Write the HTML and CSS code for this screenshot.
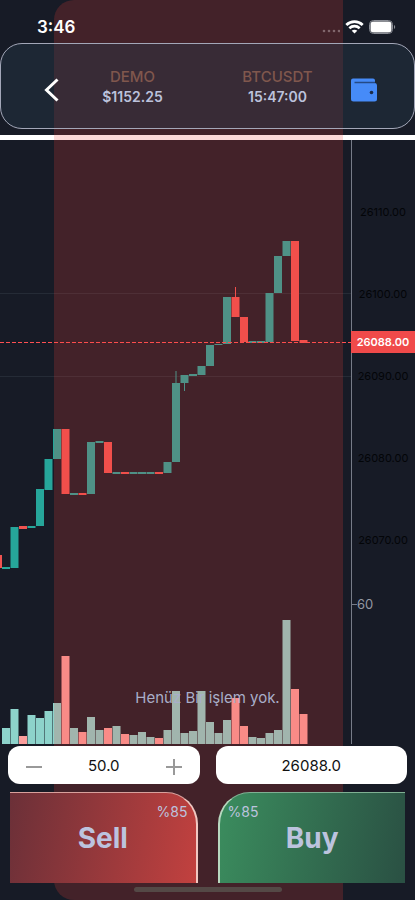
FILE: index.html
```html
<!DOCTYPE html>
<html lang="tr">
<head>
    <meta charset="UTF-8">
    <meta name="viewport" content="width=device-width, initial-scale=1.0">
    <title>BTCUSDT</title>
    <link rel="stylesheet" href="styles.css">
</head>
<body>
    <div class="app">
        <div class="tint"></div>

        <!-- Status bar -->
        <div class="status">
            <span class="clock">3:46</span>
            <span class="status-icons">
                <svg class="dots" width="18" height="14" viewBox="0 0 18 14">
                    <circle cx="2" cy="11" r="1.3"/><circle cx="7" cy="11" r="1.3"/><circle cx="12" cy="11" r="1.3"/><circle cx="17" cy="11" r="1.3"/>
                </svg>
                <svg width="19" height="14" viewBox="0 0 19 14" fill="none" stroke="#fff">
                    <path d="M1.3 5C6 .6 13 .6 17.700 5" stroke-width="2.800"/>
                    <path d="M4.300 8.200c3-2.800 7.400-2.800 10.400 0" stroke-width="2.600"/>
                    <path d="M9.500 13.500 6.700 10.700c1.600-1.400 4-1.400 5.600 0z" fill="#fff" stroke="none"/>
                </svg>
                <svg width="27" height="14" viewBox="0 0 27 14">
                    <rect x=".5" y=".5" width="23" height="13" rx="4" fill="none" stroke="#8a8d95"/>
                    <rect x="1.500" y="1.500" width="21" height="11" rx="3" fill="#fff"/>
                    <path d="M25 5v4c1.600-.6 1.600-3.400 0-4z" fill="#8a8d95"/>
                </svg>
            </span>
        </div>

        <header class="header">
            <button class="icon-btn" type="button" aria-label="Geri">
                <svg width="16" height="24" viewBox="0 0 16 24" fill="none" stroke="#fff" stroke-width="3">
                    <path d="M13.500 1.500 2.500 12l11 10.500"/>
                </svg>
            </button>
            <div class="info">
                <span class="info-label">DEMO</span>
                <span class="info-value">$1152.25</span>
            </div>
            <div class="info">
                <span class="info-label">BTCUSDT</span>
                <span class="info-value">15:47:00</span>
            </div>
            <button class="icon-btn" type="button" aria-label="Cüzdan">
                <svg width="28" height="24" viewBox="0 0 28 24">
                    <path d="M3 .5h20a2 2 0 0 1 2 2v2.500a2.500 2.500 0 0 1 2 2.500V21a2.500 2.500 0 0 1-2.500 2.500h-21A2.500 2.500 0 0 1 1 21V2.500a2 2 0 0 1 2-2z" fill="#468bf8"/>
                    <path d="M4.500 4.500H25" stroke="#244a86" stroke-width="1.500"/>
                    <circle cx="21.500" cy="14.500" r="1.800" fill="#1b2c49"/>
                </svg>
            </button>
        </header>

        <!-- Chart -->
        <div class="chart">
            <svg class="plot" id="plot" viewBox="0 140 415 604">
                <path class="grid-line" d="M0 293.500h351M0 376.500h351"/>
                <g id="candles"></g>
                <path class="price-line" d="M0 342.500h351"/>
                <g id="volumes"></g>
                <path class="axis-line" d="M351.500 140v604M352 604.500h5"/>
                <g class="axis-text">
                    <text x="383" y="216">26110.00</text>
                    <text x="383" y="298">26100.00</text>
                    <text x="383" y="380">26090.00</text>
                    <text x="383" y="462">26080.00</text>
                    <text x="383" y="544">26070.00</text>
                </g>
                <text class="volume-text" x="357" y="609">60</text>
                <rect class="price-tag" x="351" y="331" width="64" height="22"/>
                <text class="price-text" x="383" y="346">26088.00</text>
            </svg>
        </div>
        <p class="empty">Henüz Bir işlem yok.</p>

        <!-- Order form -->
        <form class="order">
            <div class="field">
                <button class="step" type="button" aria-label="Azalt">
                    <svg width="16" height="16" viewBox="0 0 16 16"><path d="M0 8h16"/></svg>
                </button>
                <input type="text" aria-label="Miktar" value="50.0">
                <button class="step" type="button" aria-label="Artır">
                    <svg width="16" height="16" viewBox="0 0 16 16"><path d="M0 8h16M8 0v16"/></svg>
                </button>
            </div>
            <div class="field">
                <input type="text" aria-label="Fiyat" value="26088.0">
            </div>
            <button class="trade sell" type="button"><span class="rate">%85</span>Sell</button>
            <button class="trade buy" type="button"><span class="rate">%85</span>Buy</button>
        </form>
        <div class="home-bar"></div>
    </div>

    <script>
        // [up, top, bottom, volume top, wick top, wick bottom]
        var bars = [
            [1, 567, 569, 728], [1, 527, 568, 709], [0, 526, 529, 736], [1, 526, 528, 715],
            [1, 489, 526, 718], [1, 459, 490, 711], [1, 429, 459, 703], [0, 429, 494, 656],
            [1, 493, 495, 728], [0, 493, 495, 732], [1, 442, 494, 717], [1, 441, 443, 730],
            [0, 442, 473, 728], [1, 472, 474, 726], [0, 472, 474, 734], [1, 472, 474, 735],
            [1, 472, 474, 732], [1, 472, 474, 737], [0, 472, 474, 738], [1, 462, 473, 730],
            [1, 383, 462, 691, 371, 383], [1, 375, 383, 733, 383, 391], [1, 374, 376, 731], [1, 366, 375, 691],
            [1, 345, 366, 722], [1, 344, 345, 733], [1, 297, 344, 720], [0, 297, 317, 698, 287, 297],
            [0, 317, 342, 726], [1, 341, 343, 737], [1, 341, 343, 738], [1, 293, 342, 733],
            [1, 256, 293, 730], [1, 241, 256, 620], [0, 241, 341, 689], [0, 340, 343, 714]
        ];
        var step = 8.5;

        function addRect(group, name, x, top, width, bottom) {
            var rect = document.createElementNS("http://www.w3.org/2000/svg", "rect");
            rect.setAttribute("class", name);
            rect.setAttribute("x", x);
            rect.setAttribute("y", top);
            rect.setAttribute("width", width);
            rect.setAttribute("height", bottom - top);
            document.getElementById(group).appendChild(rect);
        }

        // Candle cut off by the left edge
        addRect("candles", "down", 0, 555, 2, 568);

        bars.forEach(function(bar, i) {
            var x = 2 + i * step;
            var name = bar[0] ? "up" : "down";
            addRect("candles", name, x, bar[1], 8, bar[2]);
            if (bar[4]) {
                addRect("candles", name, x + 3.5, bar[4], 1, bar[5]);
            }
            addRect("volumes", name, x, bar[3], 8, 744);
        });
    </script>
</body>
</html>
```
FILE: styles.css
```css
* {
    box-sizing: border-box;
}

body {
    margin: 0;
    background-color: #171b26;
    font-family: Inter, "Liberation Sans", sans-serif;
}

.app {
    position: relative;
    min-height: 100vh;
    overflow: hidden;
}

.tint {
    position: absolute;
    top: 0;
    bottom: 0;
    left: 13%;
    right: 72px;
    z-index: 1;
    border-radius: 20px 0 0 20px;
    background-color: rgba(244, 67, 54, 0.2);
    pointer-events: none;
}

.status,
.header,
.empty,
.order,
.home-bar {
    position: relative;
    z-index: 2;
}

.status {
    display: flex;
    justify-content: space-between;
    align-items: center;
    height: 43px;
    padding: 11px 19px 0 37px;
}

.clock {
    color: #fff;
    font-size: 17px;
    font-weight: 600;
}

.status-icons {
    display: flex;
    gap: 5px;
}

.dots {
    fill: #80666c;
}

.header {
    display: grid;
    grid-template-columns: 16px 1fr 1fr 28px;
    align-items: center;
    height: 86px;
    padding: 8px 36px 0 43px;
    border: 1px solid #a3a7b8;
    border-radius: 22px;
    background-color: rgba(39, 57, 76, 0.4);
}

button {
    padding: 0;
    border: 0;
    background: none;
    font-family: inherit;
    cursor: pointer;
}

.icon-btn svg,
.step svg {
    display: block;
}

.info {
    display: flex;
    flex-direction: column;
    align-items: center;
    padding-bottom: 6px;
    line-height: 20px;
}

.info-label {
    color: #80574d;
    font-size: 15px;
    font-weight: 500;
}

.info-value {
    color: #bcc2dc;
    font-size: 14px;
    font-weight: 600;
}

.chart {
    margin-top: 6px;
    border-top: 5px solid #fff;
}

.plot {
    display: block;
    width: 100%;
}

.grid-line {
    stroke: #252b36;
}

.price-line {
    stroke: #ff5052;
    stroke-dasharray: 4 2;
}

.axis-line {
    fill: none;
    stroke: #777c88;
}

.up {
    fill: #26a69a;
}

.down {
    fill: #f05350;
}

#volumes .up {
    fill: #8dd3cb;
}

#volumes .down {
    fill: #fa9e9c;
}

.axis-text,
.price-text {
    font-size: 11px;
    text-anchor: middle;
}

.axis-text {
    fill: #030508;
}

.price-tag {
    fill: #f04a4a;
}

.price-text {
    fill: #fff;
    font-weight: 600;
}

.volume-text {
    fill: #9598a1;
    font-size: 13px;
}

.empty {
    height: 20px;
    margin: -56px 0 38px;
    color: #a9aec8;
    font-size: 15px;
    line-height: 20px;
    text-align: center;
}

.order {
    display: grid;
    grid-template-columns: minmax(0, 1fr) minmax(0, 1fr);
    gap: 8px 16px;
    padding: 0 8px;
}

.field {
    display: flex;
    align-items: center;
    height: 38px;
    padding: 0 18px;
    border-radius: 12px;
    background-color: #fff;
}

.field input {
    flex: 1;
    min-width: 0;
    padding: 0;
    border: 0;
    background: none;
    color: #111;
    font-family: inherit;
    font-size: 15px;
    text-align: center;
}

.step {
    padding-top: 4px;
}

.step svg {
    fill: none;
    stroke: #999;
    stroke-width: 2;
}

.trade {
    position: relative;
    height: 91px;
    margin: 0 2px;
    border-top: 1px solid #d9a09c;
    color: #bcc3de;
    font-size: 28px;
    font-weight: 700;
}

.sell {
    border-right: 2px solid #f0c8c2;
    border-top-right-radius: 32px;
    background: linear-gradient(100deg, #6b3038, #c2413f);
}

.buy {
    border-top-color: #7fb093;
    border-left: 2px solid #b9d8c0;
    border-top-left-radius: 32px;
    background: linear-gradient(100deg, #3b8d5e, #2a5043);
}

.rate {
    position: absolute;
    top: 10px;
    font-size: 14px;
    font-weight: 400;
}

.sell .rate {
    right: 8px;
}

.buy .rate {
    left: 8px;
}

.home-bar {
    width: 148px;
    height: 5px;
    margin: 4px auto 0;
    border-radius: 3px;
    background-color: #544946;
}
```
